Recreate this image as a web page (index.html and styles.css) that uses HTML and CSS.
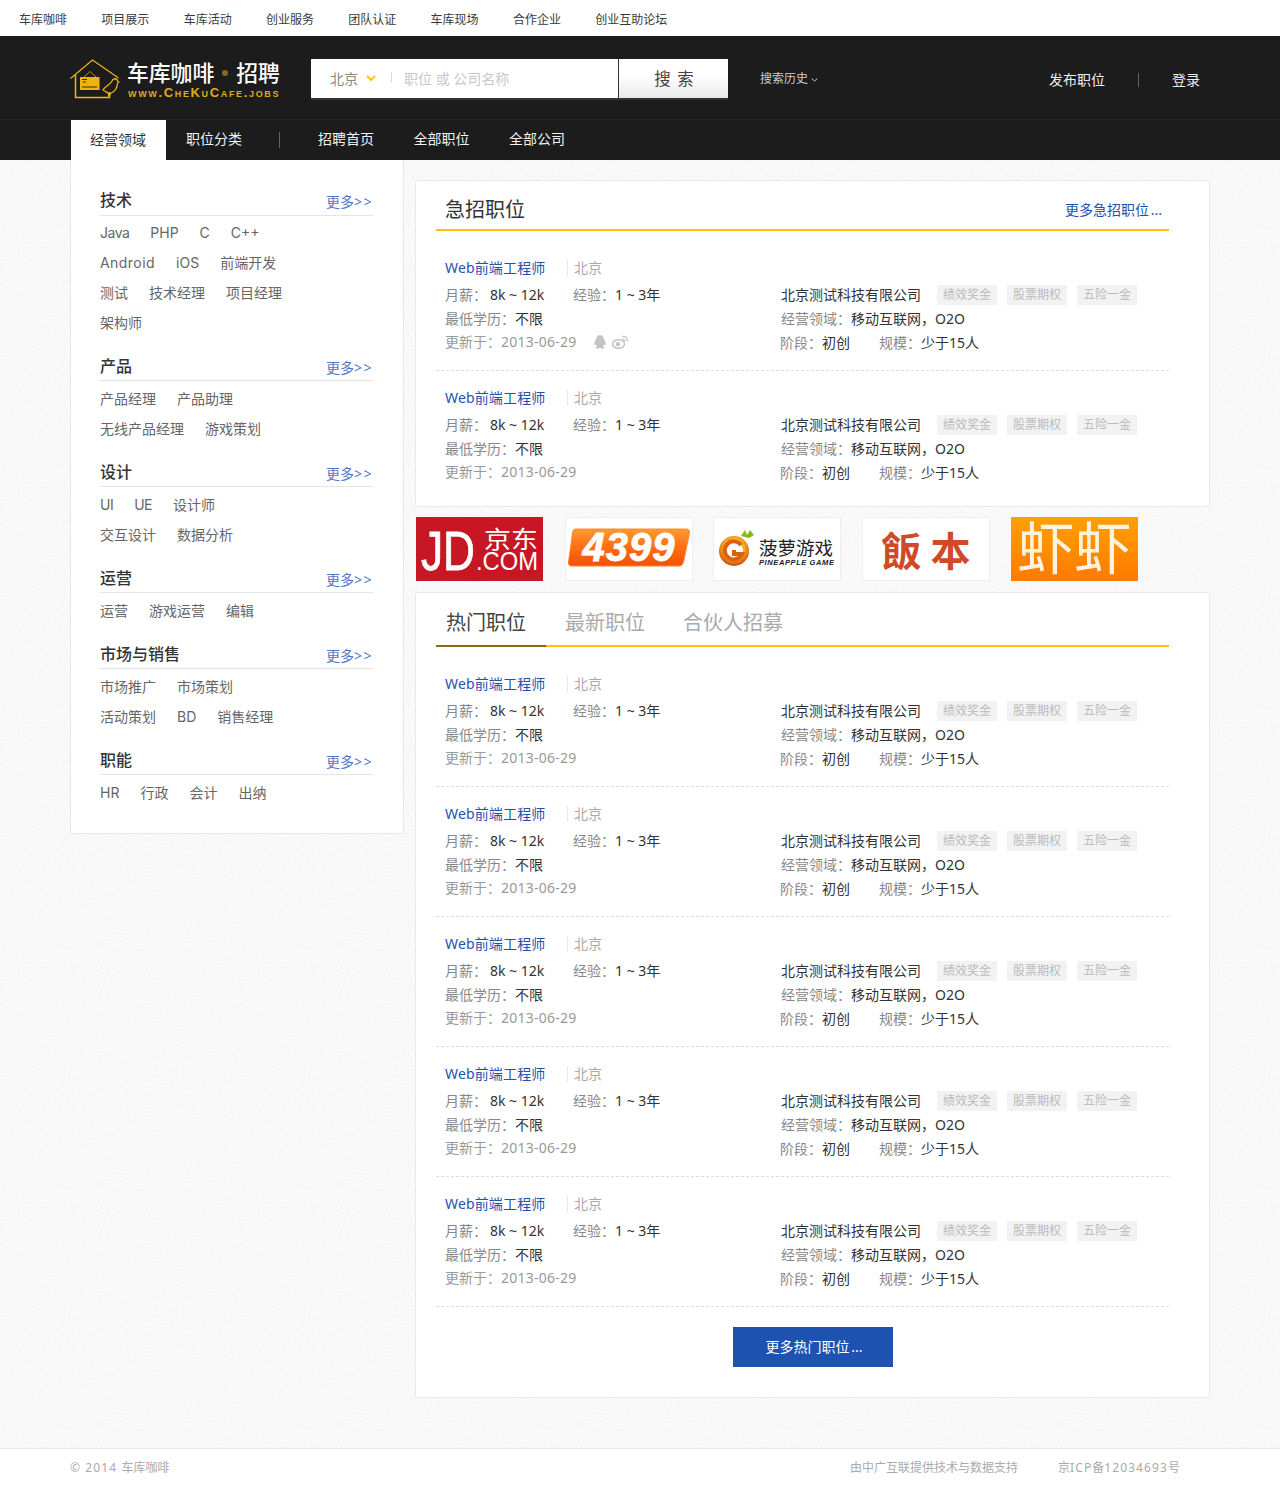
FILE: index.html
```html
<!DOCTYPE html>
<html lang="zh">
<head>
<meta charset="utf-8">
<title>车库咖啡 · 招聘</title>
<link rel="stylesheet" href="styles.css">
</head>
<body>
<div class="topbar">
  <a>车库咖啡</a><a>项目展示</a><a>车库活动</a><a>创业服务</a><a>团队认证</a><a>车库现场</a><a>合作企业</a><a>创业互助论坛</a>
</div>
<header class="header">
  <div class="logo">
    <svg class="logo-mark" width="50" height="40" viewBox="0 0 50 40">
      <path d="M.5 19.500 22.500 1 48.500 19" fill="none" stroke="#f0b313" stroke-width="1.200"/>
      <path d="M5.500 16V38.500H39.500V33" fill="none" stroke="#f0b313" stroke-width="1.500"/>
      <path d="M14 18 20 12.500 26 18" fill="none" stroke="#f0b313" stroke-width=".8"/>
      <rect x="10" y="18" width="19.500" height="13" fill="#f0b313"/>
      <path d="M12 20.500h5M13 23h3M12 28h15" stroke="#3a2c00" stroke-width="1.100"/>
      <path d="M33 31c2-4 6-4 9-9 1-3 5-3 5.500 0l1.500 1-1.500 1c0 5-3 9-6.500 10l-2 3-1-3c-2-1-3-2-5-3z" fill="none" stroke="#f0b313" stroke-width="1.300"/>
    </svg>
    <div class="logo-text">
      <div class="logo-name">车库咖啡<i class="logo-dot"></i>招聘</div>
      <div class="logo-url">www.CheKuCafe.jobs</div>
    </div>
  </div>
  <div class="search">
    <div class="search-field">
      <span class="city">北京</span>
      <svg class="city-arrow" width="10" height="6" viewBox="0 0 10 6"><path d="M1 1l4 4 4-4" fill="none" stroke="#ffc000" stroke-width="1.800"/></svg>
      <i class="search-sep"></i>
      <span class="placeholder">职位 或 公司名称</span>
    </div>
    <div class="search-btn">搜 索</div>
  </div>
  <div class="history">搜索历史<svg width="7" height="4" viewBox="0 0 7 4"><path d="M.7.7 3.500 3 6.300.7" fill="none" stroke="#ccc"/></svg></div>
  <div class="user">
    <a>发布职位</a><i class="user-sep"></i><a>登录</a>
  </div>
</header>
<nav class="nav">
  <a class="nav-tab nav-active">经营领域</a>
  <a class="nav-tab">职位分类</a>
  <i class="nav-sep"></i>
  <a class="nav-link">招聘首页</a>
  <a class="nav-link">全部职位</a>
  <a class="nav-link">全部公司</a>
</nav>
<div class="page">
  <aside class="side">
    <section class="cat">
      <div class="cat-head"><h3>技术</h3><a>更多<span class="gt">&gt;&gt;</span></a></div>
      <div class="cat-row"><a class="en en-narrow">Java</a><a class="en">PHP</a><a class="en">C</a><a class="en">C++</a></div>
      <div class="cat-row"><a class="en en-wide">Android</a><a class="en">iOS</a><a>前端开发</a></div>
      <div class="cat-row"><a>测试</a><a>技术经理</a><a>项目经理</a></div>
      <div class="cat-row"><a>架构师</a></div>
    </section>
    <section class="cat">
      <div class="cat-head"><h3>产品</h3><a>更多<span class="gt">&gt;&gt;</span></a></div>
      <div class="cat-row"><a>产品经理</a><a>产品助理</a></div>
      <div class="cat-row"><a>无线产品经理</a><a>游戏策划</a></div>
    </section>
    <section class="cat">
      <div class="cat-head"><h3>设计</h3><a>更多<span class="gt">&gt;&gt;</span></a></div>
      <div class="cat-row"><a class="en en-narrow">UI</a><a class="en en-narrow">UE</a><a>设计师</a></div>
      <div class="cat-row"><a>交互设计</a><a>数据分析</a></div>
    </section>
    <section class="cat">
      <div class="cat-head"><h3>运营</h3><a>更多<span class="gt">&gt;&gt;</span></a></div>
      <div class="cat-row"><a>运营</a><a>游戏运营</a><a>编辑</a></div>
    </section>
    <section class="cat">
      <div class="cat-head"><h3>市场与销售</h3><a>更多<span class="gt">&gt;&gt;</span></a></div>
      <div class="cat-row"><a>市场推广</a><a>市场策划</a></div>
      <div class="cat-row"><a>活动策划</a><a class="en">BD</a><a>销售经理</a></div>
    </section>
    <section class="cat">
      <div class="cat-head"><h3>职能</h3><a>更多<span class="gt">&gt;&gt;</span></a></div>
      <div class="cat-row"><a class="en">HR</a><a>行政</a><a>会计</a><a>出纳</a></div>
    </section>
  </aside>
  <main class="main">
    <section class="card card-urgent">
      <div class="card-head"><h2>急招职位</h2><a>更多急招职位 ...</a></div>
      <div class="jobs">
        <article class="job">
          <div class="job-left">
            <div class="job-title"><a>Web前端工程师</a><span>北京</span></div>
            <div class="job-line"><em>月薪：</em><b class="salary">8k ~ 12k</b><em>经验：</em><b>1 ~ 3年</b></div>
            <div class="job-line"><em>最低学历：</em><b>不限</b></div>
            <div class="job-line job-date"><em>更新于：</em><span class="date">2013-06-29</span>
              <svg class="share" width="14" height="14" viewBox="0 0 14 14"><path d="M7 0C4.300 0 3 2.200 3 4.700 1.700 6.500.8 8.300 1.200 10.200c.6.200 1.200-.3 1.700-1.100.2.900.6 1.600 1.200 2.200C3 11.700 2.300 12.300 2.700 13c.5.800 2.800.6 4.300 0 1.500.6 3.800.8 4.300 0 .4-.7-.3-1.300-1.400-1.700.6-.6 1-1.300 1.200-2.200.5.800 1.100 1.300 1.700 1.100.4-1.900-.5-3.700-1.800-5.500C11 2.200 9.700 0 7 0z" fill="#c4c4c4"/></svg>
              <svg class="share" width="17" height="14" viewBox="0 0 17 14"><ellipse cx="6.500" cy="9" rx="6" ry="4.300" fill="none" stroke="#c4c4c4" stroke-width="1.500"/><circle cx="6" cy="9.300" r="2.200" fill="#c4c4c4"/><path d="M10 1.500c3.300-.8 6 1.800 5.200 5M10.300 4.200c1.500-.3 2.700.9 2.300 2.300" fill="none" stroke="#c4c4c4" stroke-width="1.300"/></svg>
            </div>
          </div>
          <div class="job-right">
            <div class="job-line"><b>北京测试科技有限公司</b><span class="tag tag-first">绩效奖金</span><span class="tag">股票期权</span><span class="tag">五险一金</span></div>
            <div class="job-line"><em>经营领域：</em><b>移动互联网，O2O</b></div>
            <div class="job-line"><em>阶段：</em><b class="stage">初创</b><em>规模：</em><b>少于15人</b></div>
          </div>
        </article>
        <article class="job job-last">
          <div class="job-left">
            <div class="job-title"><a>Web前端工程师</a><span>北京</span></div>
            <div class="job-line"><em>月薪：</em><b class="salary">8k ~ 12k</b><em>经验：</em><b>1 ~ 3年</b></div>
            <div class="job-line"><em>最低学历：</em><b>不限</b></div>
            <div class="job-line job-date"><em>更新于：</em><span class="date">2013-06-29</span></div>
          </div>
          <div class="job-right">
            <div class="job-line"><b>北京测试科技有限公司</b><span class="tag tag-first">绩效奖金</span><span class="tag">股票期权</span><span class="tag">五险一金</span></div>
            <div class="job-line"><em>经营领域：</em><b>移动互联网，O2O</b></div>
            <div class="job-line"><em>阶段：</em><b class="stage">初创</b><em>规模：</em><b>少于15人</b></div>
          </div>
        </article>
      </div>
    </section>
    <div class="brands">
      <div class="brand">
        <svg width="127" height="64" viewBox="0 0 127 64"><rect width="127" height="64" fill="#c71624"/>
          <text x="5" y="53" class="jd-big" textLength="54" lengthAdjust="spacingAndGlyphs">JD</text><text x="68" y="31" class="jd-cn" textLength="54" lengthAdjust="spacingAndGlyphs">京东</text><text x="60" y="53" class="jd-com" textLength="62" lengthAdjust="spacingAndGlyphs">.COM</text></svg>
      </div>
      <div class="brand brand-box">
        <svg width="126" height="62" viewBox="0 0 126 62">
          <defs><linearGradient id="g4399" x1="0" y1="0" x2="0" y2="1"><stop offset="0" stop-color="#ff9a2e"/><stop offset=".55" stop-color="#ff6a12"/><stop offset="1" stop-color="#f2500a"/></linearGradient></defs>
          <path d="M10 11h110c3 0 4 2 3.500 4l-6 29c-1 3-2 4-5 4H6c-3 0-4-2-3.500-4l4-29c.5-3 1-4 3.500-4z" fill="url(#g4399)" stroke="#ff8a2a"/>
          <text x="63" y="43" class="t4399">4399</text></svg>
      </div>
      <div class="brand brand-box">
        <svg width="127" height="62" viewBox="0 0 127 62">
          <defs><radialGradient id="gball" cx=".5" cy=".4" r=".6"><stop offset="0" stop-color="#fff3a0"/><stop offset=".6" stop-color="#f7a71c"/><stop offset="1" stop-color="#c9480c"/></radialGradient></defs>
          <circle cx="20" cy="33" r="15" fill="url(#gball)"/><circle cx="20" cy="33" r="9" fill="#fff"/>
          <path d="M27 27a9 9 0 1 0 1 9h-8v-4" fill="none" stroke="#d9620f" stroke-width="4"/>
          <path d="M27 18l4-6 2 5 3-5 4 5-5 3z" fill="#86b817"/>
          <text x="45" y="37" class="pine-cn">菠萝游戏</text><text x="45" y="47" class="pine-en">PINEAPPLE GAME</text></svg>
      </div>
      <div class="brand brand-box">
        <svg width="126" height="62" viewBox="0 0 126 62"><text x="63" y="48" class="fanben">飯 本</text></svg>
      </div>
      <div class="brand">
        <svg width="127" height="64" viewBox="0 0 127 64">
          <defs><linearGradient id="gxia" x1="0" y1="0" x2="0" y2="1"><stop offset="0" stop-color="#ffa000"/><stop offset="1" stop-color="#ff7a00"/></linearGradient></defs>
          <rect width="127" height="64" fill="url(#gxia)"/><text x="63.500" y="52" class="xia">虾虾</text></svg>
      </div>
    </div>
    <section class="card card-hot">
      <div class="tabs"><a class="tab tab-active">热门职位</a><a class="tab">最新职位</a><a class="tab">合伙人招募</a></div>
      <div class="jobs">
        <article class="job">
          <div class="job-left">
            <div class="job-title"><a>Web前端工程师</a><span>北京</span></div>
            <div class="job-line"><em>月薪：</em><b class="salary">8k ~ 12k</b><em>经验：</em><b>1 ~ 3年</b></div>
            <div class="job-line"><em>最低学历：</em><b>不限</b></div>
            <div class="job-line job-date"><em>更新于：</em><span class="date">2013-06-29</span></div>
          </div>
          <div class="job-right">
            <div class="job-line"><b>北京测试科技有限公司</b><span class="tag tag-first">绩效奖金</span><span class="tag">股票期权</span><span class="tag">五险一金</span></div>
            <div class="job-line"><em>经营领域：</em><b>移动互联网，O2O</b></div>
            <div class="job-line"><em>阶段：</em><b class="stage">初创</b><em>规模：</em><b>少于15人</b></div>
          </div>
        </article>
        <article class="job">
          <div class="job-left">
            <div class="job-title"><a>Web前端工程师</a><span>北京</span></div>
            <div class="job-line"><em>月薪：</em><b class="salary">8k ~ 12k</b><em>经验：</em><b>1 ~ 3年</b></div>
            <div class="job-line"><em>最低学历：</em><b>不限</b></div>
            <div class="job-line job-date"><em>更新于：</em><span class="date">2013-06-29</span></div>
          </div>
          <div class="job-right">
            <div class="job-line"><b>北京测试科技有限公司</b><span class="tag tag-first">绩效奖金</span><span class="tag">股票期权</span><span class="tag">五险一金</span></div>
            <div class="job-line"><em>经营领域：</em><b>移动互联网，O2O</b></div>
            <div class="job-line"><em>阶段：</em><b class="stage">初创</b><em>规模：</em><b>少于15人</b></div>
          </div>
        </article>
        <article class="job">
          <div class="job-left">
            <div class="job-title"><a>Web前端工程师</a><span>北京</span></div>
            <div class="job-line"><em>月薪：</em><b class="salary">8k ~ 12k</b><em>经验：</em><b>1 ~ 3年</b></div>
            <div class="job-line"><em>最低学历：</em><b>不限</b></div>
            <div class="job-line job-date"><em>更新于：</em><span class="date">2013-06-29</span></div>
          </div>
          <div class="job-right">
            <div class="job-line"><b>北京测试科技有限公司</b><span class="tag tag-first">绩效奖金</span><span class="tag">股票期权</span><span class="tag">五险一金</span></div>
            <div class="job-line"><em>经营领域：</em><b>移动互联网，O2O</b></div>
            <div class="job-line"><em>阶段：</em><b class="stage">初创</b><em>规模：</em><b>少于15人</b></div>
          </div>
        </article>
        <article class="job">
          <div class="job-left">
            <div class="job-title"><a>Web前端工程师</a><span>北京</span></div>
            <div class="job-line"><em>月薪：</em><b class="salary">8k ~ 12k</b><em>经验：</em><b>1 ~ 3年</b></div>
            <div class="job-line"><em>最低学历：</em><b>不限</b></div>
            <div class="job-line job-date"><em>更新于：</em><span class="date">2013-06-29</span></div>
          </div>
          <div class="job-right">
            <div class="job-line"><b>北京测试科技有限公司</b><span class="tag tag-first">绩效奖金</span><span class="tag">股票期权</span><span class="tag">五险一金</span></div>
            <div class="job-line"><em>经营领域：</em><b>移动互联网，O2O</b></div>
            <div class="job-line"><em>阶段：</em><b class="stage">初创</b><em>规模：</em><b>少于15人</b></div>
          </div>
        </article>
        <article class="job">
          <div class="job-left">
            <div class="job-title"><a>Web前端工程师</a><span>北京</span></div>
            <div class="job-line"><em>月薪：</em><b class="salary">8k ~ 12k</b><em>经验：</em><b>1 ~ 3年</b></div>
            <div class="job-line"><em>最低学历：</em><b>不限</b></div>
            <div class="job-line job-date"><em>更新于：</em><span class="date">2013-06-29</span></div>
          </div>
          <div class="job-right">
            <div class="job-line"><b>北京测试科技有限公司</b><span class="tag tag-first">绩效奖金</span><span class="tag">股票期权</span><span class="tag">五险一金</span></div>
            <div class="job-line"><em>经营领域：</em><b>移动互联网，O2O</b></div>
            <div class="job-line"><em>阶段：</em><b class="stage">初创</b><em>规模：</em><b>少于15人</b></div>
          </div>
        </article>
      </div>
      <a class="more-btn">更多热门职位 ...</a>
    </section>
  </main>
</div>
<footer class="footer">
  <span><span class="foot-en">© 2014 </span>车库咖啡</span>
  <span class="footer-right"><span>由中广互联提供技术与数据支持</span><span>京<span class="foot-en">ICP</span>备<span class="foot-en">12034693</span>号</span></span>
</footer>
</body>
</html>
```

FILE: styles.css
```css
* { box-sizing: border-box; }
html, body { margin: 0; padding: 0; }
body {
  width: 1280px;
  height: 1485px;
  overflow: hidden;
  font-family: "Noto Sans", "Noto Sans CJK SC", sans-serif;
  font-size: 14px;
  color: #333;
  background-color: #f3f3f3;
  background-image: url("data:image/svg+xml;utf8,<svg xmlns='http://www.w3.org/2000/svg' width='240' height='240'><filter id='n'><feTurbulence type='fractalNoise' baseFrequency='.75' numOctaves='2' stitchTiles='stitch'/><feColorMatrix values='0 0 0 0 1 0 0 0 0 1 0 0 0 0 1 0 0 0 1.6 -.35'/></filter><rect width='240' height='240' filter='url(%23n)'/></svg>");
}
a { color: inherit; text-decoration: none; }
i, em { font-style: normal; }
b { font-weight: 400; }
h2, h3 { margin: 0; font-weight: 400; }

.topbar {
  height: 36px;
  background: #fff;
  display: flex;
  align-items: center;
  gap: 34.3px;
  padding: 1px 0 0 19px;
  font-size: 12px;
  color: #3a3a3a;
}

.header {
  height: 84px;
  background: #1c1c1c;
  border-bottom: 1px solid #272727;
  display: flex;
  align-items: flex-start;
  color: #fff;
}
.logo { display: flex; margin-left: 70px; width: 241px; padding-top: 23px; flex: none; }
.logo-mark { flex: none; }
.logo-text { margin-left: 7px; }
.logo-name {
  display: flex;
  align-items: center;
  height: 27px;
  font-size: 21.800px;
  font-weight: 500;
  line-height: 27px;
  color: #fff;
  white-space: nowrap;
}
.logo-dot { width: 6px; height: 6px; border-radius: 50%; background: #8a6a1e; margin: 0 8px; }
.logo-url {
  font-family: "Liberation Sans", sans-serif;
  font-variant: small-caps;
  font-weight: 700;
  font-size: 13px;
  letter-spacing: 1.650px;
  line-height: 14px;
  color: #e0aa14;
  white-space: nowrap;
  margin-left: 1px;
}
.search {
  display: flex;
  width: 417px;
  height: 41px;
  margin-top: 23px;
  border-bottom: 2px solid #333;
  flex: none;
}
.search-field {
  width: 307px;
  background: #fff;
  display: flex;
  align-items: center;
  padding: 0 0 2px 19px;
}
.city { color: #888; font-size: 14px; }
.city-arrow { margin-left: 8px; }
.search-sep { width: 1px; height: 11px; background: #ddd; margin: 0 12px 0 15px; }
.placeholder { color: #c8c8c8; }
.search-btn {
  width: 110px;
  padding-left: 2px;
  background: linear-gradient(#fff 40%, #eaeaea);
  border-left: 1px solid #333;
  text-align: center;
  font-size: 16.500px;
  line-height: 39px;
  letter-spacing: 1px;
  color: #444;
}
.history {
  margin: 33px 0 0 32px;
  font-size: 12px;
  line-height: 20px;
  color: #ccc;
  width: 289px;
  flex: none;
}
.history svg { margin: 0 0 1px 3px; }
.user { display: flex; align-items: center; margin-top: 33px; line-height: 22px; color: #eee; }
.user-sep { width: 1px; height: 14px; background: #666; margin: 0 33px 0 33px; }

.nav {
  height: 40px;
  background: #1c1c1c;
  display: flex;
  align-items: center;
  padding-left: 71px;
  color: #f2f2f2;
}
.nav-tab { padding: 0 20px 2px; line-height: 38px; }
.nav-active { width: 95px; background: #fff; color: #333; padding: 0 19px; line-height: 40px; }
.nav-sep { width: 1px; height: 16px; background: #666; margin: 0 38px 0 17px; }
.nav-link { margin-right: 39.500px; padding-bottom: 2px; line-height: 38px; }

.page { display: flex; align-items: flex-start; padding-left: 70px; }
.side {
  width: 334px;
  height: 674px;
  background: #fff;
  border: 1px solid #e6e6e6;
  border-top: 0;
  padding: 20px 30px 0 29px;
  flex: none;
}
.cat { margin-bottom: 8px; }
.cat-head {
  height: 36px;
  display: flex;
  justify-content: space-between;
  align-items: center;
  border-bottom: 1px solid #e4e4e4;
  margin-bottom: 2px;
  padding: 5px 0 2px;
}
.cat + .cat .cat-head { height: 35px; margin-bottom: 3px; padding-top: 6px; }
.cat-head h3 { font-size: 16px; font-weight: 500; color: #333; }
.cat-head a { font-size: 14px; color: #4f78c6; padding-top: 4px; }
.gt { letter-spacing: 1.500px; }
.cat-row { height: 30px; line-height: 30px; display: flex; gap: 21px; color: #666; font-size: 14px; }
.en { font-family: "Inter", "Noto Sans", sans-serif; }
.en-narrow { letter-spacing: -.5px; }
.en-wide { letter-spacing: .45px; }

.main { width: 795px; margin: 20px 0 0 11px; flex: none; }
.card { background: #fff; border: 1px solid #e8e8e8; border-radius: 2px; padding: 0 40px 0 20px; }
.card-urgent { height: 327px; }
.card-hot { height: 806px; }
.card-head {
  height: 50px;
  display: flex;
  justify-content: space-between;
  align-items: center;
  border-bottom: 2px solid #ffc000;
  padding: 0 7px 0 9px;
}
.card-head h2 { font-size: 20px; color: #333; padding-top: 6px; }
.card-head a { font-size: 14px; color: #1e52b0; padding-top: 8px; word-spacing: -2px; }
.jobs { padding-top: 10px; }
.tabs { height: 54px; display: flex; border-bottom: 2px solid #ffc000; }
.tab { height: 54px; padding: 0 19px 0 0; margin-right: 19px; font-size: 20px; line-height: 60px; color: #aaa; }
.tab-active { width: 110px; padding-left: 10px; margin-right: 19px; color: #444; border-bottom: 2px solid #8a6a14; }

.job {
  height: 130px;
  padding: 15px 0 0 9px;
  display: flex;
  border-bottom: 1px dashed #ddd;
}
.job-last { border-bottom: 0; }
.job-left { width: 335px; flex: none; }
.job-right { padding: 27px 0 0 1px; }
.job-right .job-line:last-child { margin-left: -1px; }
.job-title { height: 24px; line-height: 24px; margin-bottom: 3px; display: flex; align-items: center; }
.job-title a { color: #1e52b0; font-size: 14px; width: 101px; flex: none; letter-spacing: .15px; white-space: nowrap; }
.job-title span { color: #aaa; border-left: 1px solid #e8e8e8; margin-left: 21px; padding-left: 6px; line-height: 16px; }
.job-line { height: 24px; line-height: 24px; display: flex; align-items: center; white-space: nowrap; }
.job-line em { color: #888; font-family: "Noto Sans", "Noto Sans CJK TC", sans-serif; }
.job-line b { color: #333; }
.salary { width: 83px; margin-left: 3px; }
.stage { width: 57px; }
.job-date { position: relative; top: -1px; }
.job-date em, .date { color: #999; }
.date { letter-spacing: .25px; }
.share { margin-left: 16px; }
.share + .share { margin-left: 5px; }
.tag { width: 60px; height: 20px; line-height: 20px; background: #f2f2f2; color: #bbb; font-size: 12px; text-align: center; margin-left: 10px; }
.tag-first { margin-left: 16px; }

.brands { display: flex; gap: 20.700px; height: 64px; margin: 10px 0 11px 1px; }
.brand { width: 128px; height: 64px; }
.brand svg { display: block; }
.brand-box { border: 1px solid #eee; background: #fff; }
.jd-big { font-family: "Liberation Sans", sans-serif; font-size: 56px; fill: #fff; stroke: #fff; stroke-width: .8px; }
.jd-cn { font-family: "Noto Sans CJK SC", sans-serif; font-size: 24px; fill: #fff; }
.jd-com { font-family: "Liberation Sans", sans-serif; font-size: 25px; fill: #fff; }
.t4399 { font-family: "Liberation Sans", sans-serif; font-weight: 700; font-style: italic; font-size: 40px; fill: #fff; stroke: #fff; stroke-width: .8px; text-anchor: middle; letter-spacing: 1px; }
.pine-cn { font-family: "Noto Sans CJK SC", sans-serif; font-size: 18.500px; fill: #222; }
.pine-en { font-family: "Liberation Sans", sans-serif; font-weight: 700; font-style: italic; font-size: 7.500px; fill: #222; letter-spacing: .6px; }
.fanben { font-family: "Noto Sans CJK SC", sans-serif; font-weight: 700; font-size: 40px; fill: #d04a2a; text-anchor: middle; }
.xia { font-family: "Noto Sans CJK SC", sans-serif; font-weight: 400; font-size: 57px; fill: #fff3e0; text-anchor: middle; }

.more-btn {
  display: block;
  width: 160px;
  height: 40px;
  margin: 20px 0 0 297px;
  padding-left: 2px;
  background: #1e52b0;
  color: #fff;
  text-align: center;
  line-height: 40px;
  word-spacing: -2px;
}

.footer {
  position: absolute;
  top: 1448px;
  left: 0;
  width: 1280px;
  height: 37px;
  background: #fff;
  border-top: 1px solid #e8e8e8;
  display: flex;
  justify-content: space-between;
  padding: 0 100px 0 70px;
  font-size: 12px;
  line-height: 38px;
  color: #aaa;
}
.footer-right { display: flex; gap: 40px; }
.foot-en { letter-spacing: 1.100px; }
```
